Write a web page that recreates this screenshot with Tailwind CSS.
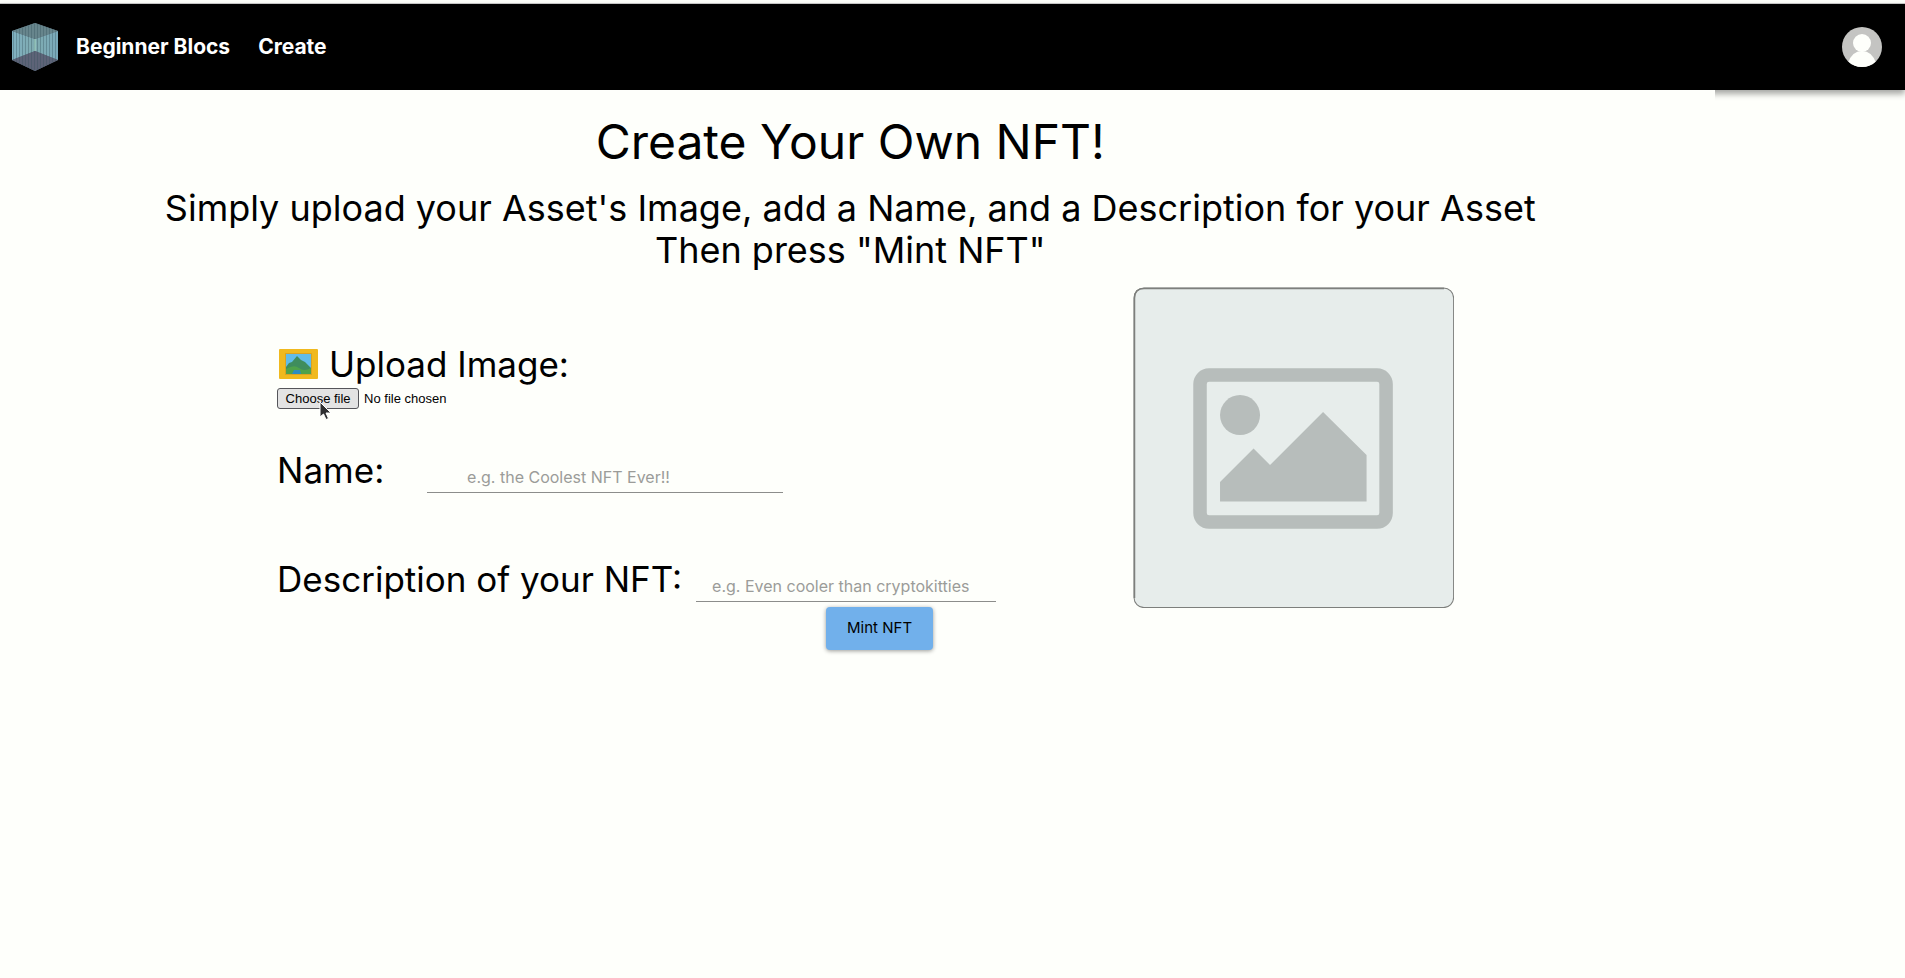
<!DOCTYPE html>
<html lang="en">
<head>
<meta charset="utf-8">
<title>Beginner Blocs</title>
<script src="https://cdn.jsdelivr.net/npm/@tailwindcss/browser@4"></script>
</head>
<body class="min-h-screen bg-[#fefffb] pt-[3px] font-[Inter,sans-serif] text-black">
<header class="flex h-[87px] items-center border-t border-[#c4c4c4] bg-black pr-[23px] pl-[10px] shadow-[0_4px_6px_rgba(0,0,0,0.35)]">
  <nav class="flex items-center text-[21px] font-bold text-white">
    <a href="#" aria-label="Home">
      <svg class="h-12 w-[50px]" viewBox="0 0 50 48">
        <defs>
          <pattern id="stripes" width="3" height="48" patternUnits="userSpaceOnUse"><rect width="1" height="48" fill="#34505c" opacity=".35"/></pattern>
          <linearGradient id="glow"><stop offset="0" stop-color="#7fb0c0"/><stop offset=".5" stop-color="#7fabb0"/><stop offset="1" stop-color="#7aaabb"/></linearGradient>
        </defs>
        <path d="M25 0 48 8V37L25 48 2 37V8Z" fill="#596a7c"/>
        <path d="M2 8 25 16 48 8V37L25 28 2 37Z" fill="url(#glow)"/>
        <path d="M25 0 48 8 25 16 2 8Z" fill="#67858c"/>
        <path d="M2 37 25 28 48 37 25 48Z" fill="#5d6377"/>
        <path d="M25 0 48 8V37L25 48 2 37V8Z" fill="url(#stripes)"/>
        <path d="M25 16V28" stroke="#a5d8c4" stroke-width="1"/>
      </svg>
    </a>
    <a href="#" class="ml-4">Beginner Blocs</a>
    <a href="#" class="ml-7">Create</a>
  </nav>
  <button type="button" aria-label="Account" class="ml-auto">
    <svg class="size-10" viewBox="0 0 40 40">
      <clipPath id="disc"><circle cx="20" cy="20" r="20"/></clipPath>
      <g clip-path="url(#disc)"><rect width="40" height="40" fill="#c4c4c2"/><circle cx="20" cy="16" r="9" fill="#fefffb"/><path d="M6 40V36Q10 24 20 24T34 36V40Z" fill="#fefffb"/></g>
    </svg>
  </button>
</header>
<main class="relative w-[90%] bg-[#fefffb] pt-6">
  <div class="pr-[14px] text-center">
    <h1 class="text-5xl leading-[56px]">Create Your Own NFT!</h1>
    <p class="mt-[17px] text-4xl leading-[42px]">Simply upload your Asset's Image, add a Name, and a Description for your Asset<br>Then press "Mint NFT"</p>
  </div>
  <div class="mt-4 grid grid-cols-[277fr_856fr_321fr_260fr] items-start">
    <form class="col-start-2 pt-14">
      <h2 class="flex items-center text-[35px] leading-[42px]">
        <svg class="mr-[11px] ml-[2px] h-[30px] w-[39px]" viewBox="0 0 39 30">
          <rect width="39" height="30" rx="1" fill="#f0b91e"/><rect x="6" y="4" width="27" height="22" fill="#d9a322"/>
          <rect x="7" y="5" width="25" height="20" fill="#62bce8"/>
          <path d="M7 18 10 14 13 13 18 7 22 11 26 13 32 19V25H7Z" fill="#3f8d5d"/><path d="M7 20Q15 15 20 19T32 19V25H7Z" fill="#4fa24b"/><path d="M15 21H21L22 25H13Z" fill="#2c8dc1"/>
        </svg>
        Upload Image:
      </h2>
      <div class="mt-[3px] flex h-[21px] items-center font-['Liberation_Sans',Arial,sans-serif] text-[13px]">
        <input id="file" type="file" class="sr-only">
        <label for="file" class="relative flex h-[21px] w-[82px] items-center justify-center rounded-[3px] border border-[#55555a] bg-[#e3e3e3]">Choose file
          <svg class="absolute top-[12px] left-[41px] h-[20px] w-[13px]" viewBox="0 0 13 20"><path d="M1 1V16L4.500 13L7 18.500L9.500 17.500L7 12H12Z" fill="#2e2e30" stroke="#fff"/></svg>
        </label>
        <span class="ml-[5px]">No file chosen</span>
      </div>
      <div class="mt-10 flex h-[46px] items-start">
        <label for="name" class="w-[150px] shrink-0 text-[35px] leading-[42px]">Name:</label>
        <input id="name" type="text" placeholder="e.g. the Coolest NFT Ever!!" class="mt-3 h-8 w-[356px] border-b border-[#8c8d8b] pl-10 text-base outline-none placeholder:text-[#9b9c99]">
      </div>
      <div class="mt-[63px] flex h-[46px] items-start">
        <label for="description" class="w-[419px] shrink-0 text-[35px] leading-[42px]">Description of your NFT:</label>
        <input id="description" type="text" placeholder="e.g. Even cooler than cryptokitties" class="mt-3 h-8 w-[300px] border-b border-[#8c8d8b] pl-4 text-base outline-none placeholder:text-[#9b9c99]">
      </div>
      <button type="submit" class="mt-[3px] ml-[549px] h-[43px] w-[107px] rounded bg-[#71b0eb] text-[15px] shadow-[0_1px_4px_rgba(0,0,0,0.4)]">Mint NFT</button>
    </form>
    <svg class="w-full" viewBox="0 0 321 321">
      <rect x="1" y="1" width="319.500" height="319.500" rx="10" fill="#e7edeb" stroke="#7d7f7c"/>
      <path d="M1.500 311V11Q1.500 1.500 11 1.500H311" fill="none" stroke="#7d7f7c" stroke-width="1.500"/>
      <rect x="67" y="88" width="186" height="147" rx="9" fill="none" stroke="#b7bdbb" stroke-width="13.500"/>
      <circle cx="107" cy="128" r="20" fill="#b7bdbb"/>
      <path d="M87 195 120.500 161.500 137 178 190 125 233.500 168V214.500H87Z" fill="#b7bdbb"/>
    </svg>
  </div>
</main>
</body>
</html>
